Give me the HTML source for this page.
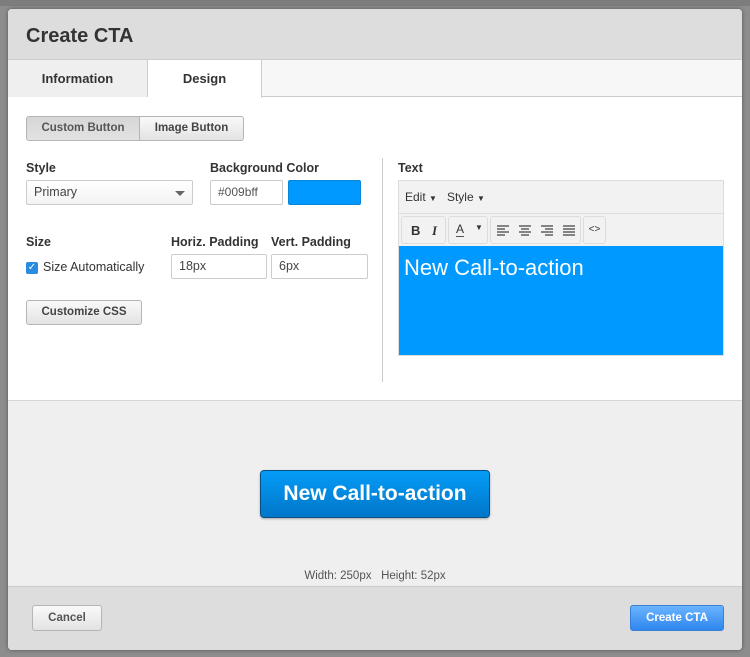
<!DOCTYPE html>
<html><head><meta charset="utf-8"><style>
*{box-sizing:border-box;margin:0;padding:0}
body{width:750px;height:657px;background:#8d8d8d;font-family:"Liberation Sans",Arial,sans-serif;position:relative;overflow:hidden;color:#333}
.a{position:absolute}
.modal{left:8px;top:9px;width:734px;height:641px;background:#fff;border-radius:4px;overflow:hidden;box-shadow:0 0 4px rgba(0,0,0,.4)}
.hdr{left:0;top:0;width:734px;height:51px;background:#dddddd;border-bottom:1px solid #ccc}
.hdr h1{position:absolute;left:18px;top:16px;font-size:20px;font-weight:bold;color:#333}
.tabs{left:0;top:51px;width:734px;height:37px;background:#f7f7f7;border-bottom:1px solid #ccc}
.tab{position:absolute;top:0;height:37px;font-size:13px;font-weight:bold;color:#333;text-align:center;line-height:37px}
.lbl{font-size:12.5px;font-weight:bold;color:#333}
.inp{border:1px solid #ccc;background:#fff;font-size:12.5px;color:#444;padding-left:7px;border-radius:2px}
.btn{border:1px solid #b5b5b5;background:linear-gradient(#f9f9f9,#e3e3e3);font-size:11.5px;font-weight:bold;color:#444;text-align:center;border-radius:3px}
.tb{position:absolute;top:3px;height:28px;border:1px solid #ddd;border-radius:3px;background:#f2f2f2}
</style></head><body>
<div class="a" style="left:0;top:0;width:750px;height:6px;background:#7d7d7d"></div>
<div class="a modal">
 <div class="a hdr"><h1>Create CTA</h1></div>
 <div class="a tabs">
  <div class="tab" style="left:0;width:140px;background:#efefef;border-right:1px solid #ccc">Information</div>
  <div class="tab" style="left:140px;width:114px;background:#fff;height:38px;border-right:1px solid #ccc">Design</div>
 </div>
 <div class="a btn" style="left:18px;top:107px;width:114px;height:25px;line-height:23px;background:linear-gradient(#d6d6d6,#e2e2e2);border-radius:3px 0 0 3px;color:#555">Custom Button</div>
 <div class="a btn" style="left:132px;top:107px;width:104px;height:25px;line-height:23px;border-radius:0 3px 3px 0;border-left:none;color:#444">Image Button</div>
 <div class="a lbl" style="left:18px;top:152px">Style</div>
 <div class="a inp" style="left:18px;top:171px;width:167px;height:25px;line-height:23px;background:linear-gradient(#fff,#f3f3f3)">Primary<span class="a" style="right:7px;top:10px;width:0;height:0;border-left:5px solid transparent;border-right:5px solid transparent;border-top:5px solid #666"></span></div>
 <div class="a lbl" style="left:202px;top:152px">Background Color</div>
 <div class="a inp" style="left:202px;top:171px;width:73px;height:25px;line-height:23px;font-size:12px;color:#555">#009bff</div>
 <div class="a" style="left:280px;top:171px;width:73px;height:25px;background:#0099ff;border:1px solid #0a86d6;border-radius:2px"></div>
 <div class="a lbl" style="left:18px;top:226px">Size</div>
 <div class="a" style="left:18px;top:253px;width:12px;height:12px;background:#2a8be0;border-radius:2px;color:#fff;font-size:10px;line-height:12px;text-align:center">✓</div>
 <div class="a" style="left:35px;top:251px;font-size:12.5px;color:#333">Size Automatically</div>
 <div class="a lbl" style="left:163px;top:226px">Horiz. Padding</div>
 <div class="a inp" style="left:163px;top:245px;width:96px;height:25px;line-height:23px">18px</div>
 <div class="a lbl" style="left:263px;top:226px">Vert. Padding</div>
 <div class="a inp" style="left:263px;top:245px;width:97px;height:25px;line-height:23px">6px</div>
 <div class="a btn" style="left:18px;top:291px;width:116px;height:25px;line-height:23px">Customize CSS</div>
 <div class="a" style="left:374px;top:149px;width:1px;height:224px;background:#ccc"></div>
 <div class="a lbl" style="left:390px;top:152px">Text</div>
 <div class="a" style="left:390px;top:171px;width:326px;height:176px;border:1px solid #ddd;background:#f2f2f2">
  <div class="a" style="left:6px;top:9px;font-size:12px;color:#333">Edit <span style="font-size:8px">▼</span>&nbsp;&nbsp;&nbsp;Style <span style="font-size:8px">▼</span></div>
  <div class="a" style="left:0;top:32px;width:324px;height:1px;background:#ddd"></div>
  <div class="tb" style="left:2px;top:35px;width:45px"><b class="a" style="left:9px;top:6px;font-size:13px">B</b><i class="a" style="left:30px;top:6px;font-size:13px;font-family:'Liberation Serif',serif;font-weight:bold">I</i></div>
  <div class="tb" style="left:49px;top:35px;width:40px"><span class="a" style="left:7px;top:6px;font-size:12px;border-bottom:1px solid #555;line-height:13px">A</span><span class="a" style="left:26px;top:6px;font-size:8px">▼</span></div>
  <div class="tb" style="left:91px;top:35px;width:91px">
   <svg class="a" style="left:6px;top:8px" width="80" height="11" stroke="#444" stroke-width="1.3">
    <path d="M0 1h12M0 4h8M0 7h12M0 10h8"/>
    <path d="M22 1h12M24 4h8M22 7h12M24 10h8"/>
    <path d="M44 1h12M48 4h8M44 7h12M48 10h8"/>
    <path d="M66 1h12M66 4h12M66 7h12M66 10h12"/>
   </svg>
  </div>
  <div class="tb" style="left:184px;top:35px;width:23px;font-size:10px;text-align:center;line-height:26px">&lt;&gt;</div>
  <div class="a" style="left:0;top:65px;width:324px;height:109px;background:#0099ff;color:#fff;font-size:22px;padding:9px 5px">New Call-to-action</div>
 </div>
 <div class="a" style="left:0;top:391px;width:734px;height:186px;background:#efefef;border-top:1px solid #d6d6d6"></div>
 <div class="a" style="left:252px;top:461px;width:230px;height:48px;border:1px solid #0a4f85;border-radius:4px;background:linear-gradient(#049cf6,#0076c9);color:#fff;font-size:21px;font-weight:bold;text-align:center;line-height:46px;box-shadow:0 1px 2px rgba(0,0,0,.3)">New Call-to-action</div>
 <div class="a" style="left:0;top:561px;width:734px;text-align:center;font-size:11.5px;color:#555">Width: 250px&nbsp;&nbsp;&nbsp;Height: 52px</div>
 <div class="a" style="left:0;top:577px;width:734px;height:64px;background:#dddddd;border-top:1px solid #ccc"></div>
 <div class="a btn" style="left:24px;top:596px;width:70px;height:26px;line-height:24px;color:#555">Cancel</div>
 <div class="a" style="left:622px;top:596px;width:94px;height:26px;line-height:24px;border:1px solid #3a7fd6;border-radius:3px;background:linear-gradient(#6ab4ff,#2f86ef);color:#fff;font-size:11.5px;font-weight:bold;text-align:center">Create CTA</div>
</div>
</body></html>
